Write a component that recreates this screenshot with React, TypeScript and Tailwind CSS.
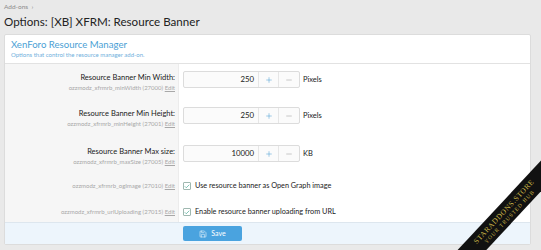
import { Plus, Minus, Check, Save } from 'lucide-react';

const NUM_ROWS = [
  { label: 'Resource Banner Min Width:', hint: 'ozzmodz_xfrmrb_minWidth (27000)', value: '250', unit: 'Pixels', h: 'h-[36px]' },
  { label: 'Resource Banner Min Height:', hint: 'ozzmodz_xfrmrb_minHeight (27001)', value: '250', unit: 'Pixels', h: 'h-[38px]' },
  { label: 'Resource Banner Max size:', hint: 'ozzmodz_xfrmrb_maxSize (27005)', value: '10000', unit: 'KB', h: 'h-[34px]' },
];

const CHECK_ROWS = [
  { hint: 'ozzmodz_xfrmrb_ogImage (27010)', text: 'Use resource banner as Open Graph image', h: 'h-[26px]' },
  { hint: 'ozzmodz_xfrmrb_urlUploading (27015)', text: 'Enable resource banner uploading from URL', h: 'h-[24px]' },
];

function Hint({ text }: { text: string }) {
  return (
    <div className="text-[6px] leading-[9px] text-[#a8a8a8] whitespace-nowrap">
      {text} <span className="underline">Edit</span>
    </div>
  );
}

export default function App() {
  return (
    <div
      className="relative w-[541px] h-[250px] overflow-hidden bg-[#e9e9e9] text-[#1a1a1a]"
      style={{ fontFamily: 'Lato, "Noto Sans", sans-serif' }}
    >
      <div className="px-1 pt-[2px]">
        <div className="text-[6.5px] leading-[9px] text-[#8c8c8c]">Add-ons &nbsp;›</div>
        <h1 className="mt-[2px] text-[11.6px] leading-[18px] text-[#222]">Options: [XB] XFRM: Resource Banner</h1>
      </div>

      <div className="mt-[3px] ml-1 w-[527px] bg-white border border-[#dcdcdc] rounded-[2px]">
        <div className="px-[6px] pt-[4px] pb-[4px] border-b border-[#e2e2e2]">
          <div className="text-[9.6px] leading-[11px] text-[#4b9fd5]">XenForo Resource Manager</div>
          <div className="text-[6px] leading-[9px] text-[#6fb0dc]">Options that control the resource manager add-on.</div>
        </div>

        <div className="flex flex-col">
          {NUM_ROWS.map(r => (
            <div key={r.hint} className={`flex ${r.h}`}>
              <div className="w-[174px] shrink-0 bg-[#f6f6f6] border-r border-[#ececec] pr-[3px] pt-[9px] text-right">
                <div className="text-[7.5px] leading-[10px]">{r.label}</div>
                <Hint text={r.hint} />
              </div>
              <div className="flex items-start pl-[4px] pt-[7px] gap-[3px]">
                <div className="flex h-[17px] w-[117px] border border-[#dcdcdc] rounded-[2px] bg-[#fbfbfb]">
                  <div className="flex-1 flex items-center justify-end pr-[4px] text-[7.8px]">{r.value}</div>
                  <div className="w-[20px] flex items-center justify-center border-l border-[#e6e6e6] text-[#4b9fd5]">
                    <Plus size={8} strokeWidth={1.6} />
                  </div>
                  <div className="w-[21px] flex items-center justify-center border-l border-[#e6e6e6] text-[#9a9a9a]">
                    <Minus size={8} strokeWidth={1.6} />
                  </div>
                </div>
                <div className="h-[17px] flex items-center text-[7.5px]">{r.unit}</div>
              </div>
            </div>
          ))}

          {CHECK_ROWS.map(r => (
            <div key={r.hint} className={`flex ${r.h}`}>
              <div className="w-[174px] shrink-0 bg-[#f6f6f6] border-r border-[#ececec] pr-[3px] pt-[9px] text-right">
                <Hint text={r.hint} />
              </div>
              <div className="flex items-start pl-[4px] pt-[9px] gap-[4px]">
                <div className="w-[8px] h-[8px] mt-[1px] border border-[#9fb8b0] rounded-[1px] flex items-center justify-center text-[#3aa08a]">
                  <Check size={7} strokeWidth={2.5} />
                </div>
                <div className="text-[7.3px] leading-[10px]">{r.text}</div>
              </div>
            </div>
          ))}
        </div>

        <div className="flex h-[22px] bg-[#edf5fc] border-t border-[#dde6ee]">
          <div className="w-[174px] shrink-0" />
          <div className="pl-[4px] pt-[3px]">
            <button className="flex items-center justify-center gap-[4px] w-[59px] h-[15px] bg-[#4aa3df] rounded-[2px] text-white text-[7px]">
              <Save size={8} strokeWidth={1.6} />
              Save
            </button>
          </div>
        </div>
      </div>

      <div className="absolute left-[401px] top-[203px] w-[210px] h-[21px] -rotate-[47deg] bg-[#111] flex flex-col items-center justify-center text-[#c9b446]"
        style={{ fontFamily: '"Liberation Serif", serif' }}>
        <div className="text-[7.5px] leading-[9px] tracking-[0.6px]">STARADDONS.STORE</div>
        <div className="text-[5.5px] leading-[7px] tracking-[1px]">YOUR TRUSTED HUB</div>
      </div>
    </div>
  );
}
